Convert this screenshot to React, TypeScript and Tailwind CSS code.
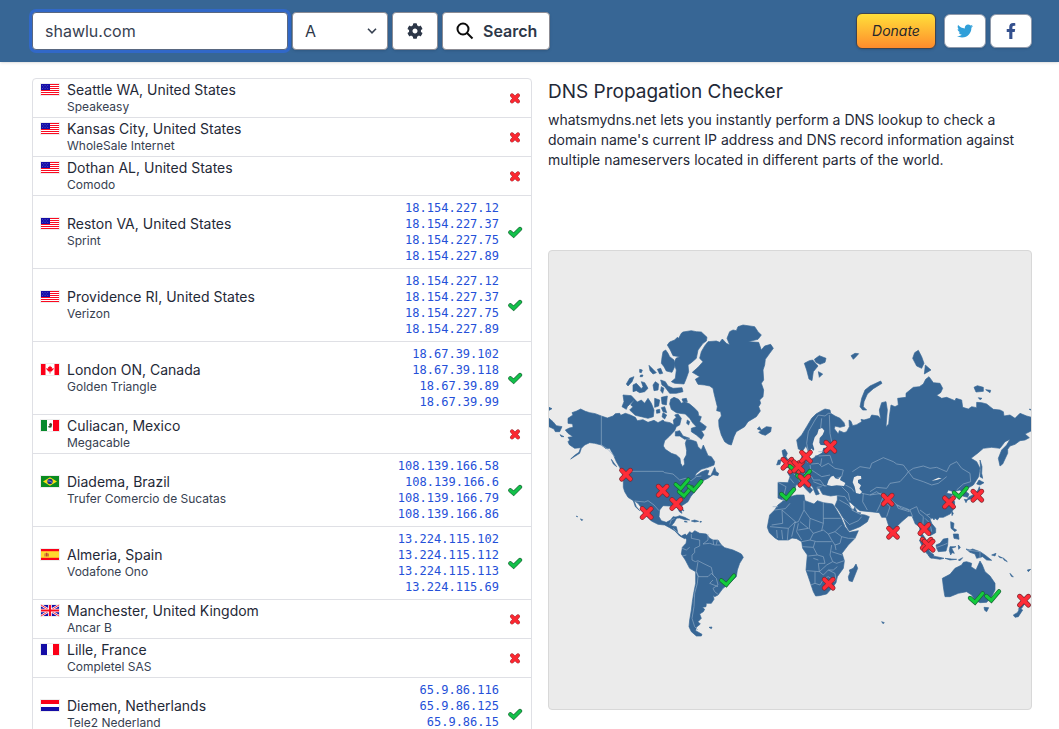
import React from "react";
import { FaCog, FaFacebookF, FaTwitter } from "react-icons/fa";

type Country = "us" | "ca" | "mx" | "br" | "es" | "gb" | "fr" | "nl";
type Server = { flag: Country; place: string; isp: string; ips: string[] };

const reston = ["18.154.227.12", "18.154.227.37", "18.154.227.75", "18.154.227.89"];

const servers: Server[] = [
  { flag: "us", place: "Seattle WA, United States", isp: "Speakeasy", ips: [] },
  { flag: "us", place: "Kansas City, United States", isp: "WholeSale Internet", ips: [] },
  { flag: "us", place: "Dothan AL, United States", isp: "Comodo", ips: [] },
  { flag: "us", place: "Reston VA, United States", isp: "Sprint", ips: reston },
  { flag: "us", place: "Providence RI, United States", isp: "Verizon", ips: reston },
  { flag: "ca", place: "London ON, Canada", isp: "Golden Triangle", ips: ["18.67.39.102", "18.67.39.118", "18.67.39.89", "18.67.39.99"] },
  { flag: "mx", place: "Culiacan, Mexico", isp: "Megacable", ips: [] },
  { flag: "br", place: "Diadema, Brazil", isp: "Trufer Comercio de Sucatas", ips: ["108.139.166.58", "108.139.166.6", "108.139.166.79", "108.139.166.86"] },
  { flag: "es", place: "Almeria, Spain", isp: "Vodafone Ono", ips: ["13.224.115.102", "13.224.115.112", "13.224.115.113", "13.224.115.69"] },
  { flag: "gb", place: "Manchester, United Kingdom", isp: "Ancar B", ips: [] },
  { flag: "fr", place: "Lille, France", isp: "Completel SAS", ips: [] },
  { flag: "nl", place: "Diemen, Netherlands", isp: "Tele2 Nederland", ips: ["65.9.86.116", "65.9.86.125", "65.9.86.15", "65.9.86.78"] },
];

function FlagArt({ code }: { code: Country }) {
  switch (code) {
    case "us":
      return (
        <>
          <path fill="#fff" d="M0 0h18v11H0z" />
          <path stroke="#fb0a20" strokeWidth="1.200" d="M0 .5h18M0 2.500h18M0 4.500h18M0 6.500h18M0 8.500h18M0 10.500h18" />
          <path fill="#150da6" d="M0 0h9v6H0z" />
          <path stroke="#6a6cd2" strokeWidth=".6" strokeDasharray="1 1.600" d="M1 1.500h7M2.200 3h5M1 4.500h7" />
        </>
      );
    case "ca":
      return (
        <>
          <path fill="#fff" d="M0 0h18v11H0z" />
          <path fill="#fb0018" d="M0 0h4.500v11H0zM13.500 0H18v11h-4.500zM9 1.500l1 1.800 1-.5-.2 2 2-.8-.4 1.400L10.500 7.600 9.400 7.500V9.500h-.8V7.500l-1.100.1L5.600 5.400 5.200 4l2 .8-.2-2 1 .5z" />
        </>
      );
    case "mx":
      return (
        <>
          <path fill="#fff" d="M0 0h18v11H0z" />
          <path fill="#078a2c" d="M0 0h6v11H0z" />
          <path fill="#fb0018" d="M12 0h6v11h-6z" />
          <path fill="#45452c" d="M8 4l2-1.200 1.200 1.700-.8 2.500L8 7.500l-1-1 1.600-.8z" />
          <path stroke="#3f9a6a" strokeWidth=".7" fill="none" d="M7 6.500Q9 9 11 6.500" />
        </>
      );
    case "br":
      return (
        <>
          <path fill="#0a8c20" d="M0 0h18v11H0z" />
          <path fill="#f7e017" d="M9 1.200l7 4.300-7 4.300-7-4.300z" />
          <circle cx="9" cy="5.500" r="2.700" fill="#17308f" />
          <path stroke="#dfe6ff" strokeWidth=".5" fill="none" d="M6.700 4.900q2.600-.2 4.500 1.600" />
        </>
      );
    case "es":
      return (
        <>
          <path fill="#fb0018" d="M0 0h18v11H0z" />
          <path fill="#ffd92e" d="M0 2.200h18v6.600H0z" />
          <path fill="#b56a3a" d="M3.500 4.500h.8v3h-.8zM7 4.500h.8v3H7z" />
          <path fill="#c2432e" d="M4.700 4.400l1-1 1 1v3h-2z" />
        </>
      );
    case "gb":
      return (
        <>
          <path fill="#150da6" d="M0 0h18v11H0z" />
          <path stroke="#fff" strokeWidth="2.200" d="M0 0l18 11M18 0L0 11" />
          <path stroke="#fb0a20" strokeWidth=".9" d="M0 0l18 11M18 0L0 11" />
          <path stroke="#fff" strokeWidth="3.600" d="M9 0v11M0 5.500h18" />
          <path stroke="#fb0a20" strokeWidth="2" d="M9 0v11M0 5.500h18" />
        </>
      );
    case "fr":
      return (
        <>
          <path fill="#fff" d="M0 0h18v11H0z" />
          <path fill="#150da6" d="M0 0h6v11H0z" />
          <path fill="#fb0018" d="M12 0h6v11h-6z" />
        </>
      );
    case "nl":
      return (
        <>
          <path fill="#fff" d="M0 0h18v11H0z" />
          <path fill="#fb0018" d="M0 0h18v4H0z" />
          <path fill="#150da6" d="M0 7h18v4H0z" />
        </>
      );
  }
}

function Flag({ code }: { code: Country }) {
  return (
    <svg viewBox="-1 -1 20 13" className="h-[13px] w-5" aria-hidden="true">
      <path fill="#ededed" d="M-1 -1h20v13H-1z" />
      <FlagArt code={code} />
    </svg>
  );
}

function Cross() {
  return (
    <>
      <path d="M-13 -13L13 13M13 -13L-13 13" stroke="#7d2730" strokeWidth="15" strokeLinecap="round" />
      <path d="M-13 -13L13 13M13 -13L-13 13" stroke="#fd2d38" strokeWidth="11" strokeLinecap="round" />
    </>
  );
}

function Check() {
  return (
    <>
      <path d="M-18 1L-3 14L20 -13" fill="none" stroke="#186437" strokeWidth="13" strokeLinecap="round" />
      <path d="M-18 1L-3 14L20 -13" fill="none" stroke="#14cb3c" strokeWidth="9" strokeLinecap="round" />
    </>
  );
}

function StatusIcon({ ok }: { ok: boolean }) {
  return (
    <svg viewBox="-24 -24 48 48" className="ml-auto size-4" role="img" aria-label={ok ? "Resolved" : "Failed"}>
      {ok ? (
        <>
          <path d="M-14 1L-4 10L15 -9" fill="none" stroke="#23703f" strokeWidth="13" strokeLinecap="round" />
          <path d="M-14 1L-4 10L15 -9" fill="none" stroke="#12c04a" strokeWidth="9" strokeLinecap="round" />
        </>
      ) : (
        <>
          <path d="M-9 -8L9 10M9 -8L-9 10" stroke="#a03038" strokeWidth="12" strokeLinecap="round" />
          <path d="M-9 -8L9 10M9 -8L-9 10" stroke="#fb2831" strokeWidth="9" strokeLinecap="round" />
        </>
      )}
    </svg>
  );
}

const americas = [
  // North and Central America
  "M60 325L75 315 72 308 86 303 98 297 112 304 125 308 142 311 160 318 178 324 195 318 202 311 215 310 218 316 232 310 245 314 262 322 268 332 285 329 300 337 318 331 330 338 345 330 350 335 366 338 378 345 376 330 385 322 380 315 390 312 400 325 395 345 385 350 380 362 365 378 350 392 346 408 352 418 370 430 385 435 396 445 398 460 404 470 410 462 408 448 415 435 416 422 412 400 416 388 430 390 445 395 450 410 460 420 466 405 475 425 480 437 490 440 500 455 498 465 480 472 460 478 445 490 440 500 460 486 475 480 483 482 478 495 488 498 494 485 500 472 504 485 512 490 510 497 495 494 480 505 465 512 460 520 440 545 428 560 420 575 405 585 396 590 402 610 395 606 386 590 365 588 345 587 335 600 333 620 340 632 355 637 368 630 375 620 387 622 378 638 370 647 385 650 390 670 400 678 412 672 418 680 410 686 395 678 380 662 365 653 350 645 330 643 310 633 295 618 285 600 270 580 258 572 265 590 275 602 262 590 256 572 240 562 230 545 226 532 226 505 222 490 215 472 205 455 195 432 185 415 174 416 160 405 140 400 125 398 110 405 100 415 95 430 68 447 80 436 93 427 98 413 80 415 64 404 60 395 65 390 60 382 75 380 60 370 52 360 64 354 75 352 74 342 60 340Z",
  // South America
  "M412 682L425 665 432 670 440 662 455 670 475 672 485 685 495 690 510 690 520 705 530 713 555 720 570 727 580 732 586 742 575 760 568 780 565 800 545 820 525 835 510 855 500 860 495 855 498 868 490 880 475 880 474 890 463 892 470 898 466 905 455 912 460 925 450 935 457 942 445 952 443 962 462 973 460 978 445 978 430 965 423 950 425 930 430 900 433 875 437 850 443 820 443 785 425 775 412 750 400 732 403 712 414 700 416 690Z",
  // Greenland
  "M470 108L480 95 505 93 515 97 523 87 535 100 545 105 537 85 545 65 555 60 565 62 570 50 585 45 620 50 630 65 640 75 630 88 600 95 632 97 640 120 650 108 668 103 676 115 665 130 652 148 650 165 645 180 647 210 640 220 647 240 645 260 635 270 638 280 632 290 637 303 625 320 600 335 590 350 565 365 558 380 550 405 540 402 530 395 520 375 513 350 512 330 520 318 518 305 506 302 508 290 503 270 498 250 495 235 485 228 470 225 450 223 442 208 455 200 433 187 450 172 465 155 455 145 460 125Z",
  // Canadian Arctic
  "M400 70L405 66 430 62 445 65 460 66 477 82 475 93 465 100 450 120 445 145 430 158 420 165 422 185 415 205 408 222 380 220 370 215 382 205 385 180 378 160 384 145 395 140 375 137 367 120 358 105 365 96 380 90 388 82 392 85Z",
  "M345 125L353 120 360 130 365 140 378 150 380 170 372 187 355 183 348 170 340 160 342 142Z",
  "M225 255L250 257 260 268 248 280 238 290 235 298 222 290 228 275Z",
  "M260 268L268 276 280 270 290 280 300 265 310 280 318 300 316 320 300 325 280 320 262 316 245 300 255 290 248 285Z",
  "M368 268L378 262 392 268 400 280 410 275 425 282 440 295 450 305 452 317 460 320 455 335 475 350 470 360 460 362 468 375 460 388 445 375 430 365 430 355 445 350 435 340 425 325 412 312 395 310 385 308 370 298 365 282Z",
  "M235 222L245 205 258 200 252 215 240 228ZM255 225L265 220 280 236 285 230 280 215 290 218 300 235 290 245 275 248 265 242 255 245ZM303 166L315 178 325 188 315 192 306 182ZM315 225L322 215 332 222 330 240 318 242ZM338 210L352 215 360 228 375 235 402 233 405 245 385 250 365 250 350 230 342 225ZM340 262L358 258 355 285 342 282ZM320 265L335 270 332 288 320 292ZM328 178L338 175 344 190 335 192ZM275 178L283 180 280 188 275 187ZM278 195L285 195 283 200 276 200ZM340 293L350 290 356 308 345 305ZM340 230L348 235 344 250 338 242Z",
  "M325 300L335 298 336 308 326 310ZM345 308L356 315 350 327 342 320ZM382 365L395 362 405 378 425 385 410 388 395 378 382 378ZM418 330L425 335 422 345 416 340ZM402 267L415 265 418 275 405 275Z",
  // Iceland
  "M628 357L634 350 640 360 655 350 670 352 668 365 652 376 640 372 632 367 640 362Z",
  // Chukotka tip and small Pacific islands
  "M3 325L15 335 25 347 42 350 35 365 22 365 18 357 3 350ZM3 292L12 296 3 301ZM36 374L48 380 40 380ZM190 448L200 462 206 470 196 462Z",
  // Caribbean
  "M375 625L395 617 410 622 425 630 410 629 395 624ZM430 633L440 630 452 634 440 636ZM410 633L418 636 410 636ZM456 634L461 635 456 637ZM404 597L408 603 403 601ZM483 952L492 951 490 956ZM97 627L104 629 102 632ZM85 618L89 620 87 621Z",
];

const oldWorld = [
  // Eurasia
  "M125 302L135 297 150 300 152 310 165 318 180 325 192 338 195 348 180 352 165 348 163 356 175 372 178 362 192 368 200 365 208 350 207 330 213 334 218 347 230 344 245 335 243 328 252 330 270 325 275 315 295 318 302 328 298 300 305 278 318 275 322 300 318 350 326 342 328 320 333 285 345 290 355 285 353 265 378 262 378 250 390 240 400 232 418 230 430 222 437 208 447 200 460 218 480 220 488 235 482 248 470 256 485 265 500 262 525 272 528 265 545 270 548 292 565 297 575 290 590 293 590 277 605 278 620 282 630 290 640 298 660 300 670 305 672 318 690 315 705 325 720 310 740 318 755 322 755 362 735 372 748 383 735 390 720 392 705 403 690 408 683 418 683 430 668 462 660 468 655 445 665 420 680 405 690 388 675 395 660 415 635 412 610 415 595 428 573 445 590 455 600 475 596 500 580 525 563 535 558 545 567 552 563 562 548 558 546 545 540 540 520 545 505 540 500 550 518 553 512 560 524 575 523 595 510 612 490 622 478 622 472 630 462 622 450 627 455 640 467 655 467 668 450 677 440 665 428 655 424 668 436 685 442 703 430 690 420 675 419 650 406 642 396 618 385 618 365 635 350 650 346 680 335 675 327 650 322 635 318 622 305 622 298 608 270 605 240 602 230 595 212 578 205 575 212 592 220 600 224 592 232 608 242 608 240 613 255 615 268 620 262 635 240 650 208 663 200 650 190 625 175 600 165 587 172 570 172 555 152 558 128 553 118 535 110 535 118 552 108 555 98 532 80 512 84 525 98 540 90 550 78 538 64 520 48 525 44 540 30 550 26 562 8 570 -6 564 -6 517 24 518 30 500 22 486 38 480 50 465 64 458 66 430 76 428 78 448 95 447 105 442 108 430 95 415 85 425 78 408 68 422 55 417 50 390 65 375 80 350 95 325 108 312Z",
  // Africa
  "M16 568L-6 585 -16 600 -31 615 -34 630 -38 652 -32 668 -15 684 -5 690 25 690 36 684 50 686 65 695 68 715 82 735 78 780 90 815 100 845 107 858 118 857 140 852 158 832 168 818 172 800 190 775 193 752 186 730 205 705 225 685 235 662 208 667 195 650 182 620 165 592 158 582 130 578 112 572 102 582 75 572 72 555 50 555 30 560Z",
  // Madagascar and southern islands
  "M228 762L233 775 225 795 217 815 207 812 205 800 210 788 208 780 220 775ZM305 935L313 938 309 941Z",
  // British Isles
  "M6 422L15 418 22 430 18 440 28 455 26 472 8 475 14 462 6 450 10 440ZM-5 450L3 450 0 463 -10 465Z",
  // Svalbard, Franz Josef, Novaya Zemlya, Severnaya Zemlya
  "M73 160L88 152 98 150 114 168 100 185 96 212 87 207 80 180ZM103 148L118 137 138 145 135 157 120 163 108 157ZM115 185L128 192 118 202ZM213 137L225 130 236 131 228 140 220 148Z",
  "M240 290L245 265 255 240 270 228 302 213 306 220 280 236 262 252 252 275 250 290 260 300 248 300Z",
  "M398 145L404 128 415 121 425 140 432 160 425 175 410 168ZM436 165L453 180 433 192ZM582 232L592 227 610 232 610 244 588 246ZM617 239L632 241 630 248ZM595 263L606 265 600 269ZM748 297L755 299 750 300Z",
  // Sakhalin and Japan
  "M600 450L606 470 605 490 608 505 600 500 602 480ZM597 510L612 518 600 525 590 522ZM598 530L603 545 592 560 575 566 560 570 568 560 585 552 594 540ZM553 568L562 570 558 578ZM515 603L520 610 516 617Z",
  // Southeast Asia
  "M455 620L466 622 462 630ZM512 635L522 640 520 655 530 660 525 665 513 655ZM520 672L535 672 537 688 522 685ZM418 690L430 695 450 725 462 735 455 745 440 730 425 705ZM468 705L480 700 490 687 504 685 503 705 498 723 475 725 470 715ZM445 735L470 740 492 745 480 748 450 743ZM495 745L515 747 530 748 510 750ZM510 710L528 710 515 715 523 730 516 728 512 735 508 722ZM535 705L541 712 536 718ZM535 750L548 743 540 752Z",
  // New Guinea and Melanesia
  "M558 717L570 720 578 717 600 725 615 735 635 751 620 750 608 740 590 745 585 732 570 727ZM635 735L648 730 645 738ZM655 738L668 744 660 743ZM670 744L682 755 672 750ZM690 790L700 801 694 799ZM742 780L752 778 745 785Z",
  // Australia
  "M487 805L510 793 525 775 545 765 550 757 560 755 575 760 573 770 588 780 600 753 607 765 615 785 630 798 645 820 645 840 635 860 620 877 600 878 585 870 575 855 560 845 535 850 510 860 495 860 493 850 490 830Z",
  // Tasmania and New Zealand
  "M612 892L626 893 620 905 614 901ZM728 860L735 880 725 895 715 898 728 882ZM720 895L728 900 715 920 705 922 700 915 712 908Z",
];

const seas = [
  "M116 358L126 354 133 362 128 374 119 384 118 398 122 405 138 406 150 405 148 412 130 414 126 428 112 436 100 438 96 428 103 418 98 402 104 382 112 372Z",
  "M141 525L146 510 153 500 160 497 166 505 174 508 184 498 180 510 196 519 192 528 170 526 155 528Z",
  "M222 502L232 497 243 498 244 506 234 510 234 518 243 526 238 536 246 546 240 552 228 549 224 530 218 517Z",
  "M455 512L475 503 485 505 470 510Z",
];

const borders =
  "M160 318V405L180 418 200 440M226 484H345L350 488 375 492 395 510 412 505 430 512 445 500 460 498M260 573L290 576 300 572 318 585 333 602M365 643L370 630 380 625M390 668L375 655M430 672L430 685 455 690 455 708 440 715 440 728 432 735 432 750 442 755 450 752 465 760 490 772 495 795 505 805 510 825 495 835 500 845 510 853M403 715L415 720 425 712M415 735L403 738M450 755L445 785 450 800 448 820 440 850 438 890 432 925 440 950 450 960M450 800L480 800 490 790 495 795M480 672L480 690 465 702 485 700 500 705 518 705M495 690L497 704M508 690L505 704M445 785L452 800M495 810L485 820 510 830";

const eastBorders =
  "M85 425L80 400 85 365 105 330 115 315 135 318 145 310 152 310M125 325L122 354M148 315L150 370 155 395M217 485L240 470 270 475 275 460 310 443 340 455 350 462 370 465 385 485 378 495 360 515 330 520 320 535 290 532 270 545M385 485L400 475 430 468 450 475 470 472 500 485 510 465 530 455 545 475 570 490 572 515 550 522 530 540M385 485L400 505 430 515 455 525 475 520 500 500M80 455L95 462 115 460 125 470 145 460 165 475 190 480 185 500 170 505M116 438L150 436 158 460M125 445L122 465M115 425L140 425M90 465L92 478 110 490 125 500 150 495M45 470L42 492 55 505 60 517M30 505L42 520M-6 517L18 530 8 570M72 490L95 500 100 510 120 510 135 530M100 515L125 525 140 528M110 532L125 530M196 525L215 535 222 545M185 530L205 550 210 572M172 557L195 560 205 575M178 570L205 585 220 602M245 550L270 555 290 545 310 560 300 585 290 605M250 550L248 575 262 600M270 555L305 550 325 560 345 580 365 595 388 600 410 590M310 570L330 590 320 620M350 585L385 598 388 605 355 595ZM390 600L398 620M410 590L418 610 430 620 428 655M420 600L440 615 455 628M435 625L450 640 455 665M440 615L450 612M210 643L235 632 245 620M215 600L245 615M185 620L210 645";

const africaBorders =
  "M-16 600L16 596 30 580M6 600L46 635 25 655 -30 650M6 600L8 640 -25 645M72 572L72 600 90 625 130 640 130 578M72 600L55 635 45 638M130 625H182M90 625L88 655 100 670 90 690 65 695M46 635L35 680M25 655L22 690M5 660L8 688M-10 660L-8 684M55 640L50 665 65 690M55 660L85 655M100 670L130 660 145 672 165 665 185 645M130 640L125 662M165 665L185 680 205 685 225 685M185 680L180 700 165 705 155 690 145 672M90 690L110 695 155 695M68 710L100 712 105 695M100 712L112 735 85 738M112 735L130 740 135 760 115 760 118 785 80 782M155 705L150 735 158 755 140 765 118 785M155 725L186 735M158 755L170 760 193 752M118 785L130 795 145 780 160 780 172 770M105 785L105 820 92 825M105 820L120 825 132 805 145 800 165 815M145 780L165 790 168 812M100 745L115 750M165 705L168 720M560 720L600 725 600 745M470 712L490 705 502 700M60 635L85 655M20 560L14 573M-22 590L-6 590";

type Marker = { x: number; y: number; ok: boolean };

const markers: Marker[] = [
  { x: 234, y: 494, ok: false }, { x: 411, y: 544, ok: true }, { x: 401, y: 522, ok: true },
  { x: 440, y: 527, ok: true }, { x: 344, y: 542, ok: false }, { x: 385, y: 582, ok: false },
  { x: 296, y: 609, ok: false }, { x: 538, y: 810, ok: true }, { x: 718, y: 551, ok: true },
  { x: 718, y: 461, ok: false }, { x: 739, y: 472, ok: false }, { x: 744, y: 468, ok: true },
  { x: 751, y: 469, ok: false }, { x: 774, y: 440, ok: false }, { x: 766, y: 496, ok: true },
  { x: 769, y: 512, ok: false }, { x: 847, y: 410, ok: false }, { x: 1019, y: 569, ok: false },
  { x: 1035, y: 668, ok: false }, { x: 1203, y: 577, ok: false }, { x: 1236, y: 547, ok: true },
  { x: 1288, y: 557, ok: false }, { x: 1129, y: 657, ok: false }, { x: 1136, y: 701, ok: false },
  { x: 1142, y: 707, ok: false }, { x: 842, y: 821, ok: false }, { x: 1284, y: 863, ok: true },
  { x: 1333, y: 857, ok: true }, { x: 1428, y: 872, ok: false },
];

function WorldMap() {
  return (
    <svg viewBox="3 -177 1446 1374" className="block h-auto w-full" role="img" aria-label="World map of DNS results">
      <g fill="#376695" stroke="#376695" strokeWidth="2" strokeLinejoin="round">
        {americas.map((d) => <path key={d} d={d} />)}
        <g transform="translate(696 0)">
          {oldWorld.map((d) => <path key={d} d={d} />)}
        </g>
      </g>
      <g transform="translate(696 0)" fill="#ebebeb">
        {seas.map((d) => <path key={d} d={d} />)}
      </g>
      <g fill="none" stroke="#90abc6" strokeWidth="2" strokeLinejoin="round">
        <path d={borders} />
        <g transform="translate(696 0)">
          <path d={eastBorders} />
          <path d={africaBorders} />
        </g>
      </g>
      {markers.map((m) => (
        <g key={`${m.x}-${m.y}`} transform={`translate(${m.x} ${m.y})`}>
          {m.ok ? <Check /> : <Cross />}
        </g>
      ))}
    </svg>
  );
}

const field = "h-[38px] rounded border border-[#8b8b93] bg-white text-[#2d3748] shadow-sm";

function Header() {
  return (
    <header className="flex h-[62px] shrink-0 items-center justify-between bg-[#376695] pr-[27px] pl-8 shadow-sm">
      <form className="flex items-center gap-1" onSubmit={(e) => e.preventDefault()}>
        <input
          type="text"
          aria-label="Domain name"
          defaultValue="shawlu.com"
          className="h-[38px] w-64 rounded border border-[#596780] bg-white px-3 text-base text-[#374151] ring-3 ring-[#3168c8] outline-none"
        />
        <div className="relative">
          <select aria-label="Record type" defaultValue="A" className={`${field} w-24 appearance-none pr-8 pl-3 text-base`}>
            <option>A</option>
            <option>AAAA</option>
            <option>CNAME</option>
            <option>MX</option>
          </select>
          <svg viewBox="0 0 10 6" fill="none" stroke="#374151" strokeWidth="1.6" className="pointer-events-none absolute top-4 right-[11px] h-1.5 w-2.5" aria-hidden="true">
            <path d="M1 .8l4 4 4-4" />
          </svg>
        </div>
        <button type="button" aria-label="Options" className={`${field} flex w-[46px] items-center justify-center`}>
          <FaCog className="size-4" />
        </button>
        <button type="submit" className={`${field} flex items-center gap-2 px-3 text-base font-semibold`}>
          <svg viewBox="0 0 20 20" fill="none" stroke="#0b0b0b" strokeWidth="2" className="size-5" aria-hidden="true">
            <circle cx="8" cy="8" r="5.500" />
            <path d="M12 12l5.500 5.500" />
          </svg>
          Search
        </button>
      </form>
      <div className="flex items-center gap-1">
        <a href="#donate" className="mr-1 flex h-9 w-20 items-center justify-center rounded-md border border-[#3f4450] bg-linear-to-b from-[#ffdf3a] to-[#ff8b2c] text-sm text-[#26262b] italic shadow-sm">
          Donate
        </a>
        <a href="#twitter" aria-label="Twitter" className="flex h-[34px] w-[42px] items-center justify-center rounded-md border border-[#8e99ab] bg-white shadow-sm">
          <FaTwitter className="size-4 text-[#309fd9]" />
        </a>
        <a href="#facebook" aria-label="Facebook" className="flex h-[34px] w-[42px] items-center justify-center rounded-md border border-[#8e99ab] bg-white shadow-sm">
          <FaFacebookF className="size-4 text-[#34508e]" />
        </a>
      </div>
    </header>
  );
}

function Results() {
  return (
    <div className="w-1/2 shrink-0 self-start overflow-hidden rounded-t border border-[#dfe0e5]">
      <table className="w-full border-collapse" aria-label="DNS results">
        <tbody>
          {servers.map((s) => (
            <tr key={s.place} className="border-b border-[#dfe0e5]">
              <td className="py-0.5 pl-[7px]">
                <div className="flex gap-[7px]">
                  <div className="pt-[2px]">
                    <Flag code={s.flag} />
                  </div>
                  <div>
                    <div className="text-sm leading-[18px] text-[#1f2937]">{s.place}</div>
                    <div className="text-xs leading-4 text-[#374151]">{s.isp}</div>
                  </div>
                </div>
              </td>
              <td className={s.ips.length ? "py-1 text-right" : "text-right"}>
                {s.ips.map((ip) => (
                  <div key={ip} className="font-['DejaVu_Sans_Mono',monospace] text-xs leading-4 text-[#2450d8]">{ip}</div>
                ))}
              </td>
              <td className="w-8 pr-2 align-middle">
                <StatusIcon ok={s.ips.length > 0} />
              </td>
            </tr>
          ))}
        </tbody>
      </table>
    </div>
  );
}

export default function App() {
  return (
    <div className="flex h-screen flex-col overflow-hidden bg-white font-['Inter',sans-serif] text-[#1f2937]">
      <Header />
      <main className="flex min-h-0 flex-1 gap-4 pt-4 pr-[27px] pl-8">
        <Results />
        <section className="min-w-0 flex-1">
          <h1 className="text-[19px] leading-7">DNS Propagation Checker</h1>
          <p className="mt-1 text-sm">
            whatsmydns.net lets you instantly perform a DNS lookup to check a domain name's current IP address and DNS record information against multiple nameservers located in different parts of the world.
          </p>
          <div className="mt-20 overflow-hidden rounded border border-[#d8d8d8] bg-[#ebebeb]">
            <WorldMap />
          </div>
        </section>
      </main>
    </div>
  );
}
